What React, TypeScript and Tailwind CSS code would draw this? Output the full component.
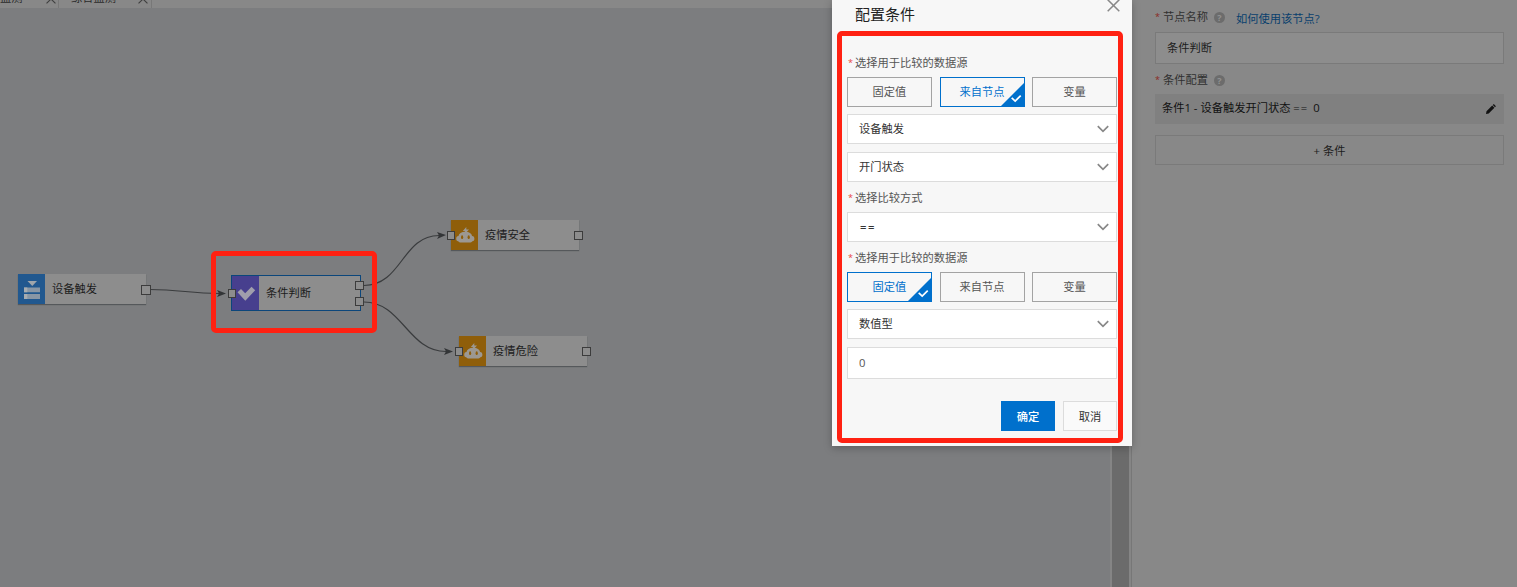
import { useState } from "react";
import type { ReactNode } from "react";
import clsx from "clsx";

const sources = ["固定值", "来自节点", "变量"];

const ports = [
  "left-[141px] top-[285px] h-[10px] w-[10px]",
  "left-[228px] top-[289px] h-[9px] w-[8px]",
  "left-[355px] top-[281px] h-[9px] w-[9px]",
  "left-[355px] top-[297px] h-[9px] w-[9px]",
  "left-[447px] top-[231px] h-[9px] w-[8px]",
  "left-[574px] top-[231px] h-[9px] w-[9px]",
  "left-[455px] top-[347px] h-[9px] w-[8px]",
  "left-[582px] top-[347px] h-[9px] w-[9px]",
];

function TriggerIcon() {
  return (
    <svg width="27" height="30" viewBox="0 0 27 30">
      <path d="M9.500 7h9.500l-4.700 5z" fill="#a0a6ab" />
      <path d="M6 13.500h16v4.700H6zM6 20h16v5H6z" fill="#8997a5" />
      <path d="M6 13.500h3.300v4.700H6zM6 20h3.300v5H6z" fill="#a8adb1" />
    </svg>
  );
}

function CheckIcon() {
  return (
    <svg width="27" height="34" viewBox="0 0 27 34">
      <path d="M5.500 16.300l3.500-3.300 4.200 4.200 6.300-6.400 3.700 3.500-9.900 10.400z" fill="#a09eac" />
    </svg>
  );
}

function RobotIcon() {
  return (
    <svg width="27" height="30" viewBox="0 0 27 30">
      <path d="M15.300 7l-3.500 4h2v1.500h1.500l2.700-3h-2.700z" fill="#9c9892" />
      <path
        d="M14.300 11.800c-4 0-6.300 2-6.800 4.200-1.600.200-2.300 1.100-2.300 2.800s.600 2.400 2 2.500c.500.900 1.600 1.200 3 1.200h8.200c1.400 0 2.500-.300 3-1.200 1.400-.100 2-.800 2-2.500s-.700-2.600-2.300-2.800c-.500-2.200-2.800-4.200-6.800-4.200z"
        fill="#9c9892"
      />
      <ellipse cx="11.100" cy="17.200" rx="1.100" ry="1.900" fill="#8f5e0a" />
      <ellipse cx="17.700" cy="17.200" rx="1.100" ry="1.900" fill="#8f5e0a" />
    </svg>
  );
}

function FlowNode({
  name,
  icon,
  className,
  iconClass,
}: {
  name: string;
  icon: ReactNode;
  className: string;
  iconClass: string;
}) {
  return (
    <div className={clsx("absolute flex items-center bg-[#8d8d8d]", className)}>
      <div className={clsx("h-full w-[27px] shrink-0", iconClass)}>{icon}</div>
      <span className="pl-[7px] text-[#1c1c1c]">{name}</span>
    </div>
  );
}

function Canvas() {
  return (
    <div className="relative min-h-0 flex-1 overflow-hidden bg-[#7c7d7f]">
      {/* canvas coordinates start below the 8px tab bar */}
      <div className="absolute -top-2 left-0 h-[587px] w-[1110px]">
        <svg className="absolute inset-0" width="1110" height="587" fill="none" stroke="#3a3c3e" strokeWidth="1.200">
          <path d="M150 289.500C180 289.500 190 293.500 219 293.500" />
          <path d="M364 285.500C402 285.500 402 235.500 439 235.500" />
          <path d="M364 302C402 302 408 351.500 446 351.500" />
          <g fill="#333537" stroke="none">
            <path d="M226 293.500l-9-3.500 2 3.500-2 3.500z" />
            <path d="M446 235l-9-3 2 3.500-2 3.500z" />
            <path d="M453 351.500l-9-3.500 2 3.500-2 3.500z" />
          </g>
        </svg>
        <FlowNode
          name="设备触发"
          icon={<TriggerIcon />}
          className="left-[18px] top-[274px] h-[30px] w-[128px] shadow-[0_1px_1px_#55585b]"
          iconClass="bg-[#21588f]"
        />
        <FlowNode
          name="条件判断"
          icon={<CheckIcon />}
          className="left-[231px] top-[275px] h-9 w-[130px] border border-[#0b467b]"
          iconClass="bg-[#473f8e]"
        />
        <FlowNode
          name="疫情安全"
          icon={<RobotIcon />}
          className="left-[451px] top-[220px] h-[30px] w-[128px] shadow-[0_1px_1px_#55585b]"
          iconClass="bg-[#8f5e0a]"
        />
        <FlowNode
          name="疫情危险"
          icon={<RobotIcon />}
          className="left-[459px] top-[336px] h-[30px] w-[128px] shadow-[0_1px_1px_#55585b]"
          iconClass="bg-[#8f5e0a]"
        />
        {ports.map((p) => (
          <span key={p} className={clsx("absolute border border-[#3c3c3c] bg-[#8d8d8d]", p)} />
        ))}
        <div className="absolute left-[211px] top-[251px] h-[82px] w-[166px] rounded-[5px] border-[5px] border-[#ff2112]" />
      </div>
    </div>
  );
}

function CloseMark({ size, className }: { size: number; className?: string }) {
  return (
    <svg width={size} height={size} viewBox="0 0 13 13" fill="none" stroke="currentColor" className={className}>
      <path d="M.7.7l11.600 11.600M12.300.7L.7 12.300" strokeWidth="1.500" />
    </svg>
  );
}

function TabBar() {
  return (
    <div className="flex h-2 shrink-0 overflow-hidden bg-[#888888] text-[#2b2b2b]">
      <div className="flex h-2 w-[59px] items-start border-r border-[#787878]">
        <span className="-mt-[10px] w-[46px] leading-4">监测</span>
        <CloseMark size={10} className="-mt-[6px] shrink-0 text-[#404040]" />
      </div>
      <div className="flex h-2 w-[93px] items-start border-r border-[#787878]">
        <span className="-mt-[10px] w-[79px] pl-3 leading-4">综合监测</span>
        <CloseMark size={10} className="-mt-[6px] shrink-0 text-[#404040]" />
      </div>
    </div>
  );
}

function Label({ text, className }: { text: string; className?: string }) {
  return (
    <div className={clsx("flex h-4 items-center text-[#555]", className)}>
      <span className="w-2 pl-px text-[9px] text-[#e8453c]">*</span>
      {text}
    </div>
  );
}

function SourcePicker({ value, onChange, className }: { value: string; onChange: (v: string) => void; className?: string }) {
  return (
    <div className={clsx("flex justify-between", className)}>
      {sources.map((s) => (
        <button
          key={s}
          onClick={() => onChange(s)}
          className={clsx(
            "relative h-[30px] w-[85px] border",
            s === value ? "border-[#0070cc] text-[#0070cc]" : "border-[#a3a3a3] text-[#555]"
          )}
        >
          {s}
          {s === value && (
            <svg className="absolute -bottom-px -right-px" width="25" height="25" viewBox="0 0 25 25">
              <path d="M25 0v25H0z" fill="#0070cc" />
              <path d="M11.700 15.800l3.500 3.300 5.500-5.500" fill="none" stroke="#fff" strokeWidth="1.700" />
            </svg>
          )}
        </button>
      ))}
    </div>
  );
}

function Select({ value, valueClass, className }: { value: string; valueClass?: string; className?: string }) {
  return (
    <div
      className={clsx(
        "flex h-[30px] items-center justify-between border border-[#dcdcdc] bg-white pl-[11px] pr-[7px] text-[#333]",
        className
      )}
    >
      <span className={valueClass}>{value}</span>
      <svg width="12" height="8" viewBox="0 0 12 8" fill="none" stroke="#888" strokeWidth="1.700">
        <path d="M.8 1.200L6 6.400l5.200-5.200" />
      </svg>
    </div>
  );
}

function ConditionDialog() {
  const [left, setLeft] = useState("来自节点");
  const [right, setRight] = useState("固定值");
  const [constant, setConstant] = useState("0");

  return (
    <div className="absolute left-[832px] top-0 h-[446px] w-[300px] bg-[#f7f7f7] px-[5px] shadow-[0_2px_8px_rgba(0,0,0,0.25)]">
      <div className="flex h-[31px] items-start justify-between pl-[18px] pr-[7px]">
        <h2 className="mt-[3px] text-[15px] leading-[22px] text-[#222]">配置条件</h2>
        <CloseMark size={13} className="-mt-px text-[#888]" />
      </div>
      <div className="h-[412px] w-[286px] rounded-[5px] border-[5px] border-[#ff2112] pl-[5px] pr-px pt-[19px]">
        <Label text="选择用于比较的数据源" />
        <SourcePicker value={left} onChange={setLeft} className="mt-[6px]" />
        <Select value="设备触发" className="mt-[7px]" />
        <Select value="开门状态" className="mt-2" />
        <Label text="选择比较方式" className="mt-2" />
        <Select value="==" valueClass="pl-px font-semibold tracking-[1.500px]" className="mt-[6px]" />
        <Label text="选择用于比较的数据源" className="mt-2" />
        <SourcePicker value={right} onChange={setRight} className="mt-[6px]" />
        <Select value="数值型" className="mt-[7px]" />
        <input
          value={constant}
          onChange={(e) => setConstant(e.target.value)}
          className="mt-2 block h-8 w-full border border-[#dcdcdc] bg-white px-[11px] pb-0.5 text-[#555] outline-none"
        />
        <div className="mt-[22px] flex justify-end gap-2">
          <button className="h-[30px] w-[54px] bg-[#0070cc] pt-0.5 font-medium text-white">确定</button>
          <button className="h-[30px] w-[54px] border border-[#dcdcdc] bg-[#fafafa] pt-0.5 text-[#333]">取消</button>
        </div>
      </div>
    </div>
  );
}

function HelpDot() {
  return (
    <span className="ml-[6px] flex h-[11px] w-[11px] items-center justify-center rounded-full bg-[#6c6c6c] text-[9px] font-bold leading-none text-[#929292]">
      ?
    </span>
  );
}

function NodePanel() {
  return (
    <div className="w-[386px] border-l border-[#777] bg-[#888888] pl-[23px] pr-[13px] pt-[9px] text-[#1c1c1c]">
      <div className="flex h-4 items-center text-[#303030]">
        <span className="w-2 text-[9px] text-[#8a2822]">*</span>
        节点名称
        <HelpDot />
        <a className="ml-[11px] mt-[3px] text-[#093f6d]">如何使用该节点?</a>
      </div>
      <div className="mt-[7px] flex h-8 items-center border border-[#7a7a7a] bg-[#8d8d8d] pl-[11px]">条件判断</div>
      <div className="mt-2 flex h-4 items-center text-[#303030]">
        <span className="w-2 text-[9px] text-[#8a2822]">*</span>
        条件配置
        <HelpDot />
      </div>
      <div className="mt-[6px] flex h-[30px] items-center justify-between bg-[#808080] pl-[7px] pr-[8px] text-[#111]">
        <span className="pb-0.5">
          条件1 - 设备触发开门状态 <span className="pr-0.5 tracking-[1px]">==</span> 0
        </span>
        <svg width="11" height="11" viewBox="0 0 11 11" fill="#111">
          <path d="M1 10l.5-2.700 5.700-5.700 2.200 2.200-5.700 5.700zM7.800 1l1-.900 2.100 2.100-.900 1z" />
        </svg>
      </div>
      <button className="mt-[11px] h-[30px] w-full border border-[#7a7a7a] pt-0.5">+ 条件</button>
    </div>
  );
}

export default function App() {
  return (
    <div className="relative flex h-[587px] w-[1517px] overflow-hidden bg-[#888888] font-['Open_Sans','Noto_Sans_CJK_SC',sans-serif] text-[11.25px] leading-4">
      <div className="flex w-[1131px] flex-col">
        <TabBar />
        <div className="flex min-h-0 flex-1">
          <Canvas />
          <div className="w-[21px] shrink-0 border-l-2 border-r-2 border-[#858585] bg-[#6b6b6b]" />
        </div>
      </div>
      <NodePanel />
      <ConditionDialog />
    </div>
  );
}
